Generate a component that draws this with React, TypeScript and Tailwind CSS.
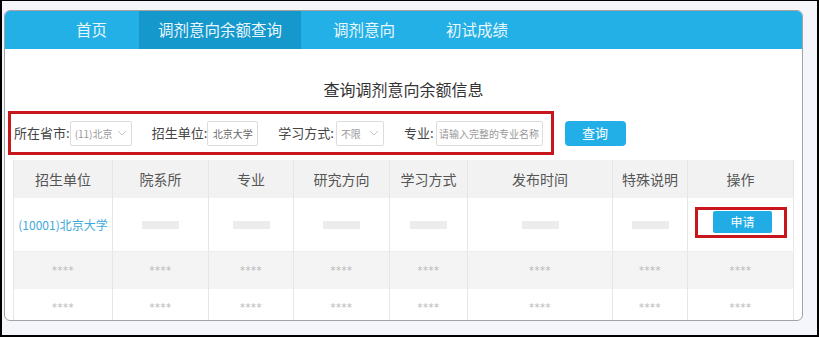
import React from 'react';

const cols = ['招生单位', '院系所', '专业', '研究方向', '学习方式', '发布时间', '特殊说明', '操作'];

function Chevron() {
  return (
    <svg width="10" height="6" viewBox="0 0 10 6" className="shrink-0">
      <polyline points="1,1 5,5 9,1" fill="none" stroke="#c8c8c8" strokeWidth="1" />
    </svg>
  );
}

function Bar() {
  return <div className="w-[37px] h-[8px] bg-[#ececec]" />;
}

function Stars() {
  return (
    <span className="text-[10px] tracking-[0.5px] text-[#b8b8b8]" style={{ fontFamily: '"DejaVu Sans", sans-serif' }}>
      ****
    </span>
  );
}

const cell = 'flex items-center justify-center border-r border-[#e6e6e6]';

export default function App() {
  return (
    <div
      className="w-[819px] h-[337px] bg-[#f4f6fb] border-l-2 border-t border-r-2 border-b-2 border-black overflow-hidden"
      style={{ fontFamily: '"Noto Sans CJK SC", "Liberation Sans", sans-serif' }}
    >
      <div className="ml-[2px] mt-[9px] w-[799px] h-[311px] bg-white border border-[#a3a3a3] rounded-[6px] overflow-hidden">
        {/* nav */}
        <div className="h-[38px] bg-[#22b0e6] flex items-stretch pl-[52px] gap-[13px] text-[15.5px] text-[#eaf7fd]">
          <div className="px-[19px] flex items-center">首页</div>
          <div className="px-[19px] flex items-center bg-[#1598cc]">调剂意向余额查询</div>
          <div className="px-[19px] flex items-center">调剂意向</div>
          <div className="px-[19px] flex items-center">初试成绩</div>
        </div>

        <div className="mt-[28px] text-center text-[16px] leading-[24px] text-[#333]">查询调剂意向余额信息</div>

        {/* filters */}
        <div className="mt-[10px] ml-[3px] flex items-center">
          <div className="h-[44px] border-[3px] border-[#c8161d] flex items-center pl-[3px] pr-[8px] gap-[20px] text-[13px] text-[#444]">
            <div className="flex items-center">
              <span>所在省市:</span>
              <div className="w-[62px] h-[25px] border border-[#dcdcdc] rounded-[2px] flex items-center justify-between px-[4px] text-[10px] text-[#999]">
                <span>(11)北京</span>
                <Chevron />
              </div>
            </div>
            <div className="flex items-center">
              <span>招生单位:</span>
              <div className="w-[51px] h-[25px] border border-[#dcdcdc] rounded-[2px] flex items-center justify-center text-[10px] text-[#666]">
                北京大学
              </div>
            </div>
            <div className="flex items-center gap-[2px]">
              <span>学习方式:</span>
              <div className="w-[48px] h-[25px] border border-[#dcdcdc] rounded-[2px] flex items-center justify-between px-[4px] text-[10px] text-[#999]">
                <span>不限</span>
                <Chevron />
              </div>
            </div>
            <div className="flex items-center gap-[2px]">
              <span>专业:</span>
              <div className="w-[107px] h-[25px] border border-[#dcdcdc] rounded-[2px] flex items-center justify-center text-[10px] text-[#999]">
                请输入完整的专业名称
              </div>
            </div>
          </div>
          <button className="ml-[11px] w-[61px] h-[25px] bg-[#22aee6] rounded-[4px] text-[13px] text-white">查询</button>
        </div>

        {/* table */}
        <div className="mt-[5px] ml-[8px] w-[780px] border-l border-[#e6e6e6]">
          <div className="grid grid-cols-[99px_96px_85px_96px_78px_145px_75px_106px] h-[38px] bg-[#f2f2f2] text-[14px] text-[#555]">
            {cols.map((c) => (
              <div key={c} className={cell}>{c}</div>
            ))}
          </div>
          <div className="grid grid-cols-[99px_96px_85px_96px_78px_145px_75px_106px] h-[54px] bg-white border-b border-[#eeeeee]">
            <div className={cell}>
              <span className="text-[12px] text-[#3ea9da]">(10001)北京大学</span>
            </div>
            {[0, 1, 2, 3, 4, 5].map((i) => (
              <div key={i} className={cell}><Bar /></div>
            ))}
            <div className={cell}>
              <div className="w-[92px] h-[31px] border-[3px] border-[#c8161d] flex items-center justify-center mb-[5px]">
                <button className="w-[59px] h-[22px] bg-[#22ace5] rounded-[2px] text-[12px] text-white ml-[4px]">申请</button>
              </div>
            </div>
          </div>
          <div className="grid grid-cols-[99px_96px_85px_96px_78px_145px_75px_106px] h-[37px] bg-[#f4f4f4]">
            {cols.map((c) => (
              <div key={c} className={cell}><Stars /></div>
            ))}
          </div>
          <div className="grid grid-cols-[99px_96px_85px_96px_78px_145px_75px_106px] h-[37px] bg-white">
            {cols.map((c) => (
              <div key={c} className={cell}><Stars /></div>
            ))}
          </div>
        </div>
      </div>
    </div>
  );
}
